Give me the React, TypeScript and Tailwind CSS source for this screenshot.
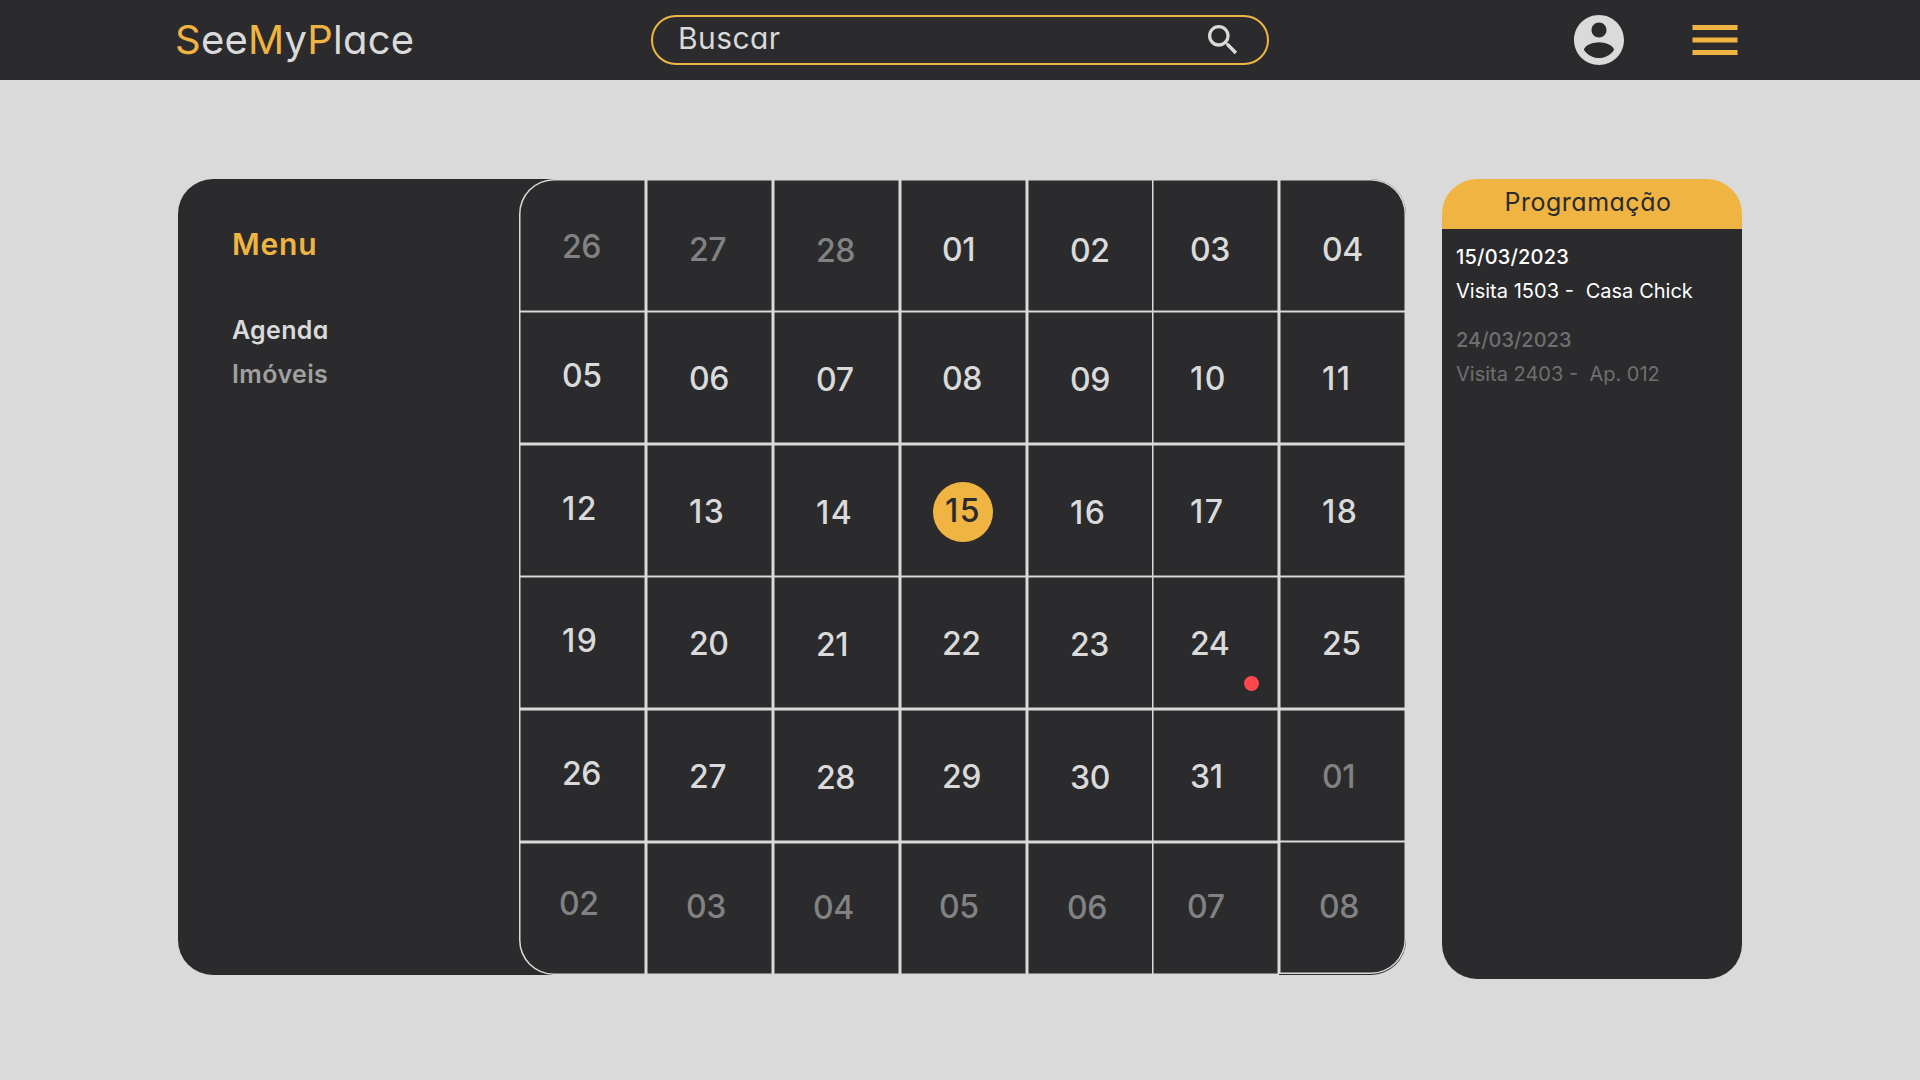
import { MdMenu, MdSearch } from "react-icons/md";

type Day = { label: string; muted?: boolean; selected?: boolean; event?: boolean };

const d = (labels: string, mutedFrom = 7, mutedTo = 7): Day[] =>
  labels.split(" ").map((label, i) => ({
    label,
    muted: i >= mutedFrom && i < mutedTo,
    selected: label === "15",
    event: label === "24",
  }));

const weeks: Day[][] = [
  d("26 27 28 01 02 03 04", 0, 3),
  d("05 06 07 08 09 10 11"),
  d("12 13 14 15 16 17 18"),
  d("19 20 21 22 23 24 25"),
  d("26 27 28 29 30 31 01", 6, 7),
  d("02 03 04 05 06 07 08", 0, 7),
];

const rowMargin = ["", "-mt-px", "", "-mt-px", "", ""];
const rowPadding = ["pt-[52px]", "pt-[49px]", "pt-[49px]", "pt-[49px]", "pt-[49px]", "pt-[46px]"];
const rowShift = ["", "", "", "", "", "-ml-[3px]"];
const colMargin = ["", "", "", "", "", "-ml-0.5", ""];
const colPadding = ["pl-[43px]", "pl-[43px]", "pl-[43px]", "pl-[42px]", "pl-[43px]", "pl-[38px]", "pl-[43px]"];
const colDrop = ["", "mt-[3px]", "mt-1", "mt-[3px]", "mt-1", "mt-[3px]", "mt-[3px]"];

function corner(row: number, col: number) {
  if (row === 0 && col === 0) return "rounded-tl-[35px]";
  if (row === 0 && col === 6) return "rounded-tr-[35px]";
  if (row === 5 && col === 0) return "rounded-bl-[35px]";
  if (row === 5 && col === 6) return "rounded-br-[35px] -mt-px";
  return "";
}

function DayCell({ day, row, col }: { day: Day; row: number; col: number }) {
  return (
    <div
      className={`relative h-[133px] w-[127px] shrink-0 bg-[#2b2b2d] shadow-[inset_0_0_0_1.5px_#dadada] ${rowPadding[row]} ${colPadding[col]} ${colMargin[col]} ${corner(row, col)}`}
    >
      {day.selected && <span className="absolute top-[38px] left-[33px] size-[60px] rounded-full bg-[#f0b442]" />}
      <span
        className={`relative block text-[32px] leading-8 font-medium ${row === 5 && col === 6 ? "mt-1" : colDrop[col]} ${rowShift[row]} ${
          day.label.startsWith("1") ? "tracking-[1.4px]" : "tracking-[-0.4px]"
        } ${day.muted ? "text-[#828282]" : day.selected ? "left-[3px] -top-px text-[#2b2b2d]" : "text-[#dadada]"}`}
      >
        {day.label}
      </span>
      {day.event && <span className="absolute top-[100px] left-[92px] size-[15px] rounded-full bg-[#ff474d]" />}
    </div>
  );
}

function AccountIcon({ className }: { className: string }) {
  return (
    <svg viewBox="0 0 24 24" fill="currentColor" className={className}>
      <path d="M12 2C6.48 2 2 6.48 2 12s4.48 10 10 10 10-4.48 10-10S17.52 2 12 2zm0 3c1.66 0 3 1.34 3 3s-1.34 3-3 3-3-1.34-3-3 1.34-3 3-3zm0 14.2c-2.5 0-4.71-1.28-6-3.22.03-1.99 4-3.08 6-3.08 1.99 0 5.97 1.09 6 3.08-1.29 1.94-3.5 3.22-6 3.22z" />
    </svg>
  );
}

const geo = "[font-feature-settings:'cv11']";

export default function App() {
  return (
    <div className="h-[1080px] w-[1920px] overflow-hidden bg-[#dadada] font-['Inter',sans-serif]">
      <header className="flex h-20 items-center bg-[#2b2b2d] pl-[175px]">
        <div
          className={`w-[476px] shrink-0 text-[40px] leading-[60px] tracking-[0.2px] whitespace-nowrap text-[#dadada] ${geo}`}
        >
          <span className="text-[#f0b442]">S</span>ee<span className="text-[#f0b442]">M</span>y
          <span className="text-[#f0b442]">P</span>lace
        </div>
        <div className="flex h-[50px] w-[618px] shrink-0 items-center justify-between rounded-full border-2 border-[#f0b442] pr-6 pl-[25px] text-[#dadada]">
          <span className={`-mt-1 text-[30px] leading-9 tracking-[0.4px] ${geo}`}>Buscar</span>
          <MdSearch className="size-10" />
        </div>
        <AccountIcon className="ml-[300px] size-[60px] shrink-0 text-[#dadada]" />
        <MdMenu className="ml-14 size-[60px] shrink-0 text-[#f0b442]" />
      </header>

      <main className="flex items-start gap-9 pt-[99px] pl-[178px]">
        <section className="flex h-[796px] w-[1228px] rounded-[35px] rounded-tr-[44px] bg-[#2b2b2d]">
          <nav className={`w-[341px] shrink-0 pt-[43px] pl-[54px] font-semibold ${geo}`}>
            <h2 className="text-[30px] leading-[45px] tracking-[0.8px] text-[#f0b442]">Menu</h2>
            <p className="mt-[45px] text-[25px] leading-9 tracking-[0.3px] text-[#dadada]">Agenda</p>
            <p className="mt-2 text-[25px] leading-9 tracking-[0.4px] text-[#a0a0a1]">Imóveis</p>
          </nav>
          <div className="flex flex-col">
            {weeks.map((week, row) => (
              <div key={row} className={`flex h-[133px] ${rowMargin[row]}`}>
                {week.map((day, col) => (
                  <DayCell key={col} day={day} row={row} col={col} />
                ))}
              </div>
            ))}
          </div>
        </section>

        <aside className="flex h-[800px] w-[300px] flex-col">
          <h2
            className={`h-[50px] rounded-t-[35px] bg-[#f0b442] pt-[5px] pr-2 text-center text-[25px] leading-9 tracking-[0.5px] text-[#2b2b2d] ${geo}`}
          >
            Programação
          </h2>
          <div className="grow rounded-b-[35px] bg-[#2b2b2d] pt-4 pl-3.5 text-xl leading-6 whitespace-pre">
            <p className="font-medium tracking-[0.2px] text-white">15/03/2023</p>
            <p className="mt-2.5 text-white [word-spacing:0.2px]">{"Visita 1503 -  Casa Chick"}</p>
            <p className="mt-[25px] font-medium text-[#6f6f70]">24/03/2023</p>
            <p className="mt-2.5 text-[#6f6f70]">{"Visita 2403 -  Ap. 012"}</p>
          </div>
        </aside>
      </main>
    </div>
  );
}
